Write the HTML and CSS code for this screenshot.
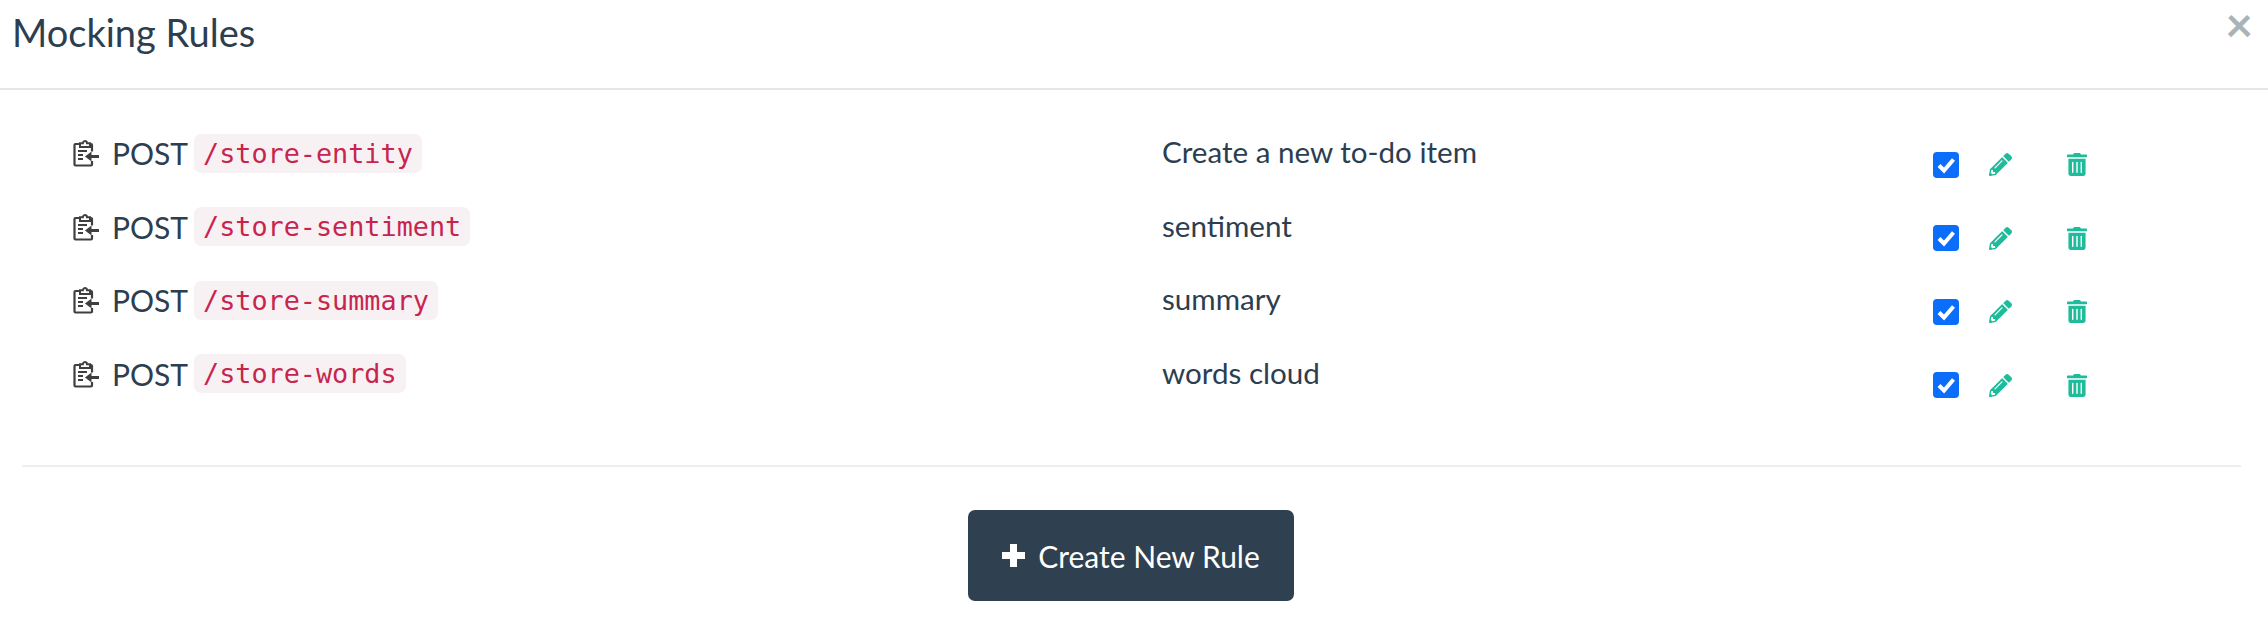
FILE: index.html
```html
<!DOCTYPE html>
<html>
    <head>
    <title>Mocking Rules</title>
    <link rel="stylesheet" href="styles.css">
    </head>
    <body>
        <svg width="0" height="0" class="defs">
            <symbol id="icon-rule" viewBox="0 0 26 28">
                <path d="M7 5H2.500a1 1 0 0 0-1 1v19.500a1 1 0 0 0 1 1H18a1 1 0 0 0 1-1V22M16 5h2a1 1 0 0 1 1 1v6.500" fill="none" stroke="#3f3f3f" stroke-width="2.200"/>
                <path d="M7 8V4.200h2.800a2.200 2.200 0 0 1 3.400-1.800q.8.600.8 1.800h3V8z" fill="#fff" stroke="#3f3f3f" stroke-width="2"/>
                <path d="M5 12h9M5 16h5M5 20h5" fill="none" stroke="#3f3f3f" stroke-width="2"/>
                <path d="M26 17.500H15.500" fill="none" stroke="#3f3f3f" stroke-width="3"/>
                <path d="M18.500 12.500L12 17.500l6.500 5z" fill="#3f3f3f"/>
            </symbol>
            <symbol id="icon-pencil" viewBox="0 0 512 512">
                <path d="M497.900 142.100l-46.100 46.100c-4.700 4.700-12.300 4.700-17 0l-111-111c-4.700-4.700-4.700-12.300 0-17l46.100-46.100c18.700-18.700 49.100-18.700 67.900 0l60.100 60.100c18.800 18.700 18.800 49.100 0 67.900zM284.200 99.800L21.600 362.400.4 483.900c-2.900 16.400 11.400 30.600 27.800 27.800l121.500-21.300 262.600-262.600c4.700-4.700 4.700-12.300 0-17l-111-111c-4.800-4.700-12.400-4.700-17.100 0zM124.100 339.900c-5.500-5.500-5.500-14.300 0-19.800l154-154c5.500-5.500 14.300-5.500 19.800 0s5.500 14.300 0 19.800l-154 154c-5.500 5.500-14.300 5.500-19.800 0zM88 424h48v36.300l-64.500 11.300-31.100-31.100L51.700 376H88v48z"/>
            </symbol>
            <symbol id="icon-trash" viewBox="0 0 448 512">
                <path d="M32 464a48 48 0 0 0 48 48h288a48 48 0 0 0 48-48V128H32zm272-256a16 16 0 0 1 32 0v224a16 16 0 0 1-32 0zm-96 0a16 16 0 0 1 32 0v224a16 16 0 0 1-32 0zm-96 0a16 16 0 0 1 32 0v224a16 16 0 0 1-32 0zM432 32H312l-9.400-18.700A24 24 0 0 0 281.100 0H166.800a23.700 23.700 0 0 0-21.400 13.300L136 32H16A16 16 0 0 0 0 48v32a16 16 0 0 0 16 16h416a16 16 0 0 0 16-16V48a16 16 0 0 0-16-16z"/>
            </symbol>
        </svg>

        <div class="modal">
            <div class="modal-header">
                <h5 class="modal-title">Mocking Rules</h5>
                <span class="close">&times;</span>
            </div>

            <div class="rules">
                <div class="rule">
                    <div class="rule-path">
                        <svg class="icon-rule"><use href="#icon-rule"/></svg>
                        <span>POST</span> <code>/store-entity</code>
                    </div>
                    <div class="rule-name">Create a new to-do item</div>
                    <div class="rule-actions">
                        <span class="check"><svg viewBox="0 0 26 26"><path d="M6 13.500l5 5 9.500-11" fill="none" stroke="#fff" stroke-width="4"/></svg></span>
                        <svg class="action edit"><use href="#icon-pencil"/></svg>
                        <svg class="action trash"><use href="#icon-trash"/></svg>
                    </div>
                </div>
                <div class="rule">
                    <div class="rule-path">
                        <svg class="icon-rule"><use href="#icon-rule"/></svg>
                        <span>POST</span> <code>/store-sentiment</code>
                    </div>
                    <div class="rule-name">sentiment</div>
                    <div class="rule-actions">
                        <span class="check"><svg viewBox="0 0 26 26"><path d="M6 13.500l5 5 9.500-11" fill="none" stroke="#fff" stroke-width="4"/></svg></span>
                        <svg class="action edit"><use href="#icon-pencil"/></svg>
                        <svg class="action trash"><use href="#icon-trash"/></svg>
                    </div>
                </div>
                <div class="rule">
                    <div class="rule-path">
                        <svg class="icon-rule"><use href="#icon-rule"/></svg>
                        <span>POST</span> <code>/store-summary</code>
                    </div>
                    <div class="rule-name">summary</div>
                    <div class="rule-actions">
                        <span class="check"><svg viewBox="0 0 26 26"><path d="M6 13.500l5 5 9.500-11" fill="none" stroke="#fff" stroke-width="4"/></svg></span>
                        <svg class="action edit"><use href="#icon-pencil"/></svg>
                        <svg class="action trash"><use href="#icon-trash"/></svg>
                    </div>
                </div>
                <div class="rule">
                    <div class="rule-path">
                        <svg class="icon-rule"><use href="#icon-rule"/></svg>
                        <span>POST</span> <code>/store-words</code>
                    </div>
                    <div class="rule-name">words cloud</div>
                    <div class="rule-actions">
                        <span class="check"><svg viewBox="0 0 26 26"><path d="M6 13.500l5 5 9.500-11" fill="none" stroke="#fff" stroke-width="4"/></svg></span>
                        <svg class="action edit"><use href="#icon-pencil"/></svg>
                        <svg class="action trash"><use href="#icon-trash"/></svg>
                    </div>
                </div>
            </div>

            <div class="modal-footer">
                <button class="btn-create"><span class="plus"></span>Create New Rule</button>
            </div>
        </div>
    </body>
</html>
```

FILE: styles.css
```css
body {
    margin: 0;
    background: #fff;
    color: #2c3e50;
    font-family: Lato, "Open Sans", sans-serif;
    font-size: 30px;
}

.defs {
    position: absolute;
}

.modal-header {
    height: 88px;
    border-bottom: 2px solid #e4e6e8;
    padding-left: 12px;
    position: relative;
}

.modal-title {
    margin: 0;
    font-size: 38px;
    font-weight: 400;
    line-height: 64px;
}

.close {
    position: absolute;
    right: 15px;
    top: 0;
    color: #aab2ba;
    font-size: 48px;
    font-weight: 700;
    line-height: 48px;
}

.rules {
    margin: 0 27px 0 22px;
    padding: 41px 0 40px;
    border-bottom: 2px solid #eceeef;
}

.rule {
    display: grid;
    grid-template-columns: 1090px 771px 1fr;
    height: 73.500px;
    padding-left: 50px;
}

.rule-path {
    display: flex;
    align-items: center;
    height: 44px;
    white-space: pre;
}

.icon-rule {
    width: 26px;
    height: 28px;
    margin: 0 13px 0 1px;
}

code {
    margin-left: 6px;
    padding: 4px 9px;
    background: #f8f1f4;
    border-radius: 7px;
    color: #c7254e;
    font-family: "DejaVu Sans Mono", monospace;
    font-size: 26.800px;
}

.rule-name {
    font-size: 29.600px;
    line-height: 42px;
}

.rule-actions {
    display: flex;
    align-items: center;
    height: 67px;
}

.check {
    display: block;
    width: 26px;
    height: 26px;
    background: #0a6efb;
    border-radius: 4px;
}

.check svg {
    display: block;
}

.action {
    fill: #1fbc9c;
}

.edit {
    width: 23px;
    height: 23px;
    margin-left: 30px;
}

.trash {
    width: 20px;
    height: 23px;
    margin-left: 55px;
}

.modal-footer {
    display: flex;
    justify-content: center;
    padding: 43px 6px 0 0;
}

.btn-create {
    display: flex;
    align-items: center;
    height: 91px;
    padding: 0 34px;
    background: #2f4050;
    border: 0;
    border-radius: 7px;
    color: #fff;
    font-family: inherit;
    font-size: 30px;
}

.plus {
    width: 23px;
    height: 23px;
    margin-right: 13px;
    background:
        linear-gradient(#fff, #fff) center / 100% 7px no-repeat,
        linear-gradient(#fff, #fff) center / 7px 100% no-repeat;
    border-radius: 2px;
}
```
